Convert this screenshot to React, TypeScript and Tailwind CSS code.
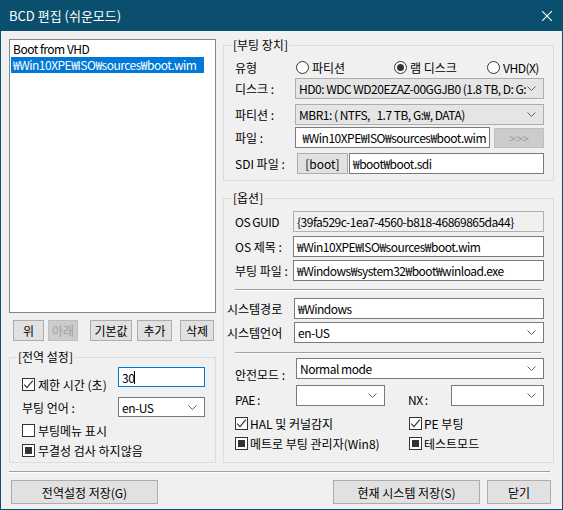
import React from "react";

type CheckState = "on" | "off" | "ind";

function Chevron() {
  return (
    <svg width="9" height="5" viewBox="0 0 9 5" className="shrink-0">
      <path d="M0.5 0.5 L4.5 4.5 L8.5 0.5" fill="none" stroke="#606060" strokeWidth="1" />
    </svg>
  );
}

function Combo({ className, text, gray }: { className: string; text?: string; gray?: boolean }) {
  return (
    <div
      className={`${className} shrink-0 flex items-center border pl-[3px] pr-[7px] ${
        gray ? "bg-[#e5e5e5] border-[#adadad]" : "bg-white border-[#7a7a7a]"
      }`}
    >
      <span className="flex-1 overflow-hidden whitespace-pre tracking-[-0.5px]">{text}</span>
      <Chevron />
    </div>
  );
}

function Field({
  className,
  text,
  ro,
  caret,
  end,
}: {
  className: string;
  text?: string;
  ro?: boolean;
  caret?: boolean;
  end?: boolean;
}) {
  return (
    <div
      className={`${className} shrink-0 flex items-center border overflow-hidden whitespace-nowrap ${
        ro ? "bg-[#f0f0f0] border-[#b0b0b0]" : "bg-white"
      } ${end ? "justify-end pr-[3px]" : "pl-[3px]"}`}
    >
      <span className="shrink-0 tracking-[-0.5px]">{text}</span>
      {caret && <span className="w-[1px] h-[13px] bg-black" />}
    </div>
  );
}

function Btn({ className, children, disabled }: { className: string; children: React.ReactNode; disabled?: boolean }) {
  return (
    <div
      className={`${className} shrink-0 flex items-center justify-center border ${
        disabled ? "bg-[#cccccc] border-[#bfbfbf] text-[#a0a0a0]" : "bg-[#e1e1e1] border-[#adadad]"
      }`}
    >
      {children}
    </div>
  );
}

function Check({ state }: { state: CheckState }) {
  return (
    <span className="w-[13px] h-[13px] border border-[#333333] bg-white flex items-center justify-center shrink-0">
      {state === "on" && (
        <svg width="11" height="11" viewBox="0 0 11 11">
          <path d="M1.2 5.6 L4 8.6 L9.8 1.6" fill="none" stroke="#333333" strokeWidth="1.2" />
        </svg>
      )}
      {state === "ind" && <span className="w-[7px] h-[7px] bg-[#333333]" />}
    </span>
  );
}

function Radio({ checked }: { checked?: boolean }) {
  return (
    <span className="w-[13px] h-[13px] rounded-full border border-[#333333] bg-white flex items-center justify-center shrink-0">
      {checked && <span className="w-[7px] h-[7px] rounded-full bg-[#333333]" />}
    </span>
  );
}

function Sep({ className }: { className: string }) {
  return <div className={`${className} h-[2px] border-t border-t-[#a0a0a0] border-b border-b-white`} />;
}

export default function App() {
  return (
    <div className="w-[563px] h-[510px] bg-[#0b4f6e] flex flex-col font-['Noto_Sans_CJK_KR','Noto_Sans',sans-serif] text-[12px] leading-[15px] text-black">
      {/* title bar */}
      <div className="h-[31px] shrink-0 flex items-center justify-between pl-[9px] pr-[11px] text-white">
        <span className="text-[13px]">BCD 편집 (쉬운모드)</span>
        <svg width="10" height="10" viewBox="0 0 10 10">
          <path d="M0 0 L10 10 M10 0 L0 10" stroke="white" strokeWidth="1.1" />
        </svg>
      </div>

      {/* body */}
      <div className="flex-1 mx-[1px] mb-[1px] bg-[#f0f0f0] pl-[8px] pt-[8px] flex flex-col">
        <div className="flex gap-[7px]">
          {/* left column */}
          <div className="w-[207px] flex flex-col">
            <div className="h-[274px] border border-[#828790] bg-white p-[1px] tracking-[-0.5px]">
              <div className="h-[16px] leading-[16px] pl-[2px]">Boot from VHD</div>
              <div className="h-[16px] leading-[16px] pl-[2px] w-[193px] bg-[#0078d7] text-white whitespace-nowrap overflow-hidden">
                ₩Win10XPE₩ISO₩sources₩boot.wim
              </div>
            </div>

            <div className="mt-[7px] h-[21px] flex">
              <Btn className="ml-[4px] w-[31px]">위</Btn>
              <Btn className="ml-[4px] w-[30px]" disabled>
                아래
              </Btn>
              <Btn className="ml-[12px] w-[42px]">기본값</Btn>
              <Btn className="ml-[5px] w-[35px]">추가</Btn>
              <Btn className="ml-[8px] w-[34px]">삭제</Btn>
            </div>

            <fieldset className="mt-[10px] h-[112px] border border-[#dcdcdc] min-w-0">
              <legend className="ml-[7px] px-[1px] leading-[12px]">[전역 설정]</legend>
              <div className="pl-[12px] flex flex-col">
                <div className="mt-[4px] flex items-start">
                  <div className="w-[96px] mt-[11px] h-[13px] flex items-center">
                    <Check state="on" />
                    <span className="ml-[3px]">제한 시간 (초)</span>
                  </div>
                  <Field className="w-[87px] h-[20px] border-[#0078d7]" text="30" caret />
                </div>
                <div className="mt-[6px] h-[20px] flex items-center">
                  <span className="w-[96px]">부팅 언어 :</span>
                  <Combo className="w-[87px] h-[20px]" text="en-US" />
                </div>
                <div className="mt-[7px] h-[13px] flex items-center">
                  <Check state="off" />
                  <span className="ml-[3px]">부팅메뉴 표시</span>
                </div>
                <div className="mt-[7px] h-[13px] flex items-center">
                  <Check state="ind" />
                  <span className="ml-[3px]">무결성 검사 하지않음</span>
                </div>
              </div>
            </fieldset>
          </div>

          {/* right column */}
          <div className="w-[331px] flex flex-col">
            <fieldset className="h-[142px] border border-[#dcdcdc] min-w-0">
              <legend className="ml-[8px] px-[1px] leading-[12px]">[부팅 장치]</legend>
              <div className="pl-[11px] pr-[9px] flex flex-col">
                <div className="mt-[6px] h-[21px] flex items-center">
                  <span className="w-[61px]">유형</span>
                  <div className="w-[98px] flex items-center">
                    <Radio />
                    <span className="ml-[3px]">파티션</span>
                  </div>
                  <div className="w-[93px] flex items-center">
                    <Radio checked />
                    <span className="ml-[3px]">램 디스크</span>
                  </div>
                  <div className="flex items-center">
                    <Radio />
                    <span className="ml-[3px] tracking-[-0.5px]">VHD(X)</span>
                  </div>
                </div>
                <div className="h-[21px] flex items-center">
                  <span className="w-[60px]">디스크 :</span>
                  <Combo className="w-[249px] h-[21px]" gray text="HD0: WDC WD20EZAZ-00GGJB0 (1.8 TB, D: G:" />
                </div>
                <div className="mt-[5px] h-[21px] flex items-center">
                  <span className="w-[60px]">파티션 :</span>
                  <Combo className="w-[249px] h-[21px]" gray text="MBR1: ( NTFS,   1.7 TB, G:₩, DATA)" />
                </div>
                <div className="mt-[2px] h-[21px] flex items-center">
                  <span className="w-[60px]">파일 :</span>
                  <Field className="w-[195px] h-[21px] border-[#7a7a7a]" end text="₩Win10XPE₩ISO₩sources₩boot.wim" />
                  <Btn className="ml-[4px] w-[50px] h-[20px]" disabled>
                    &gt;&gt;&gt;
                  </Btn>
                </div>
                <div className="mt-[5px] h-[21px] flex items-center">
                  <span className="w-[62px]">SDI 파일 :</span>
                  <Btn className="w-[51px] h-[21px]">[boot]</Btn>
                  <Field className="ml-[1px] w-[195px] h-[21px] border-[#7a7a7a]" text="₩boot₩boot.sdi" />
                </div>
              </div>
            </fieldset>

            <fieldset className="mt-[11px] h-[271px] border border-[#dcdcdc] min-w-0">
              <legend className="ml-[8px] px-[1px] leading-[12px]">[옵션]</legend>
              <div className="pl-[11px] pr-[9px] flex flex-col">
                <div className="mt-[7px] h-[21px] flex items-center">
                  <span className="w-[58px] tracking-[-0.5px]">OS GUID</span>
                  <Field className="w-[251px] h-[21px]" ro text="{39fa529c-1ea7-4560-b818-46869865da44}" />
                </div>
                <div className="mt-[4px] h-[21px] flex items-center">
                  <span className="w-[58px]">OS 제목 :</span>
                  <Field className="w-[251px] h-[21px] border-[#7a7a7a]" text="₩Win10XPE₩ISO₩sources₩boot.wim" />
                </div>
                <div className="mt-[3px] h-[21px] flex items-center">
                  <span className="w-[58px]">부팅 파일 :</span>
                  <Field className="w-[251px] h-[21px] border-[#7a7a7a]" text="₩Windows₩system32₩boot₩winload.exe" />
                </div>
                <Sep className="mt-[8px] w-[306px]" />
                <div className="mt-[7px] h-[21px] flex items-center">
                  <span className="ml-[-8px] w-[67px]">시스템경로</span>
                  <Field className="w-[250px] h-[21px] border-[#7a7a7a]" text="₩Windows" />
                </div>
                <div className="mt-[3px] h-[21px] flex items-center">
                  <span className="ml-[-8px] w-[67px]">시스템언어</span>
                  <Combo className="w-[250px] h-[21px]" text="en-US" />
                </div>
                <Sep className="mt-[9px] w-[306px]" />
                <div className="mt-[4px] h-[21px] flex items-start">
                  <span className="w-[61px] mt-[9px]">안전모드 :</span>
                  <Combo className="w-[248px] h-[21px]" text="Normal mode" />
                </div>
                <div className="mt-[6px] h-[21px] flex items-start">
                  <span className="w-[61px] mt-[7px] tracking-[-0.5px]">PAE :</span>
                  <Combo className="w-[89px] h-[21px]" />
                  <span className="ml-[23px] w-[43px] mt-[7px] tracking-[-0.5px]">NX :</span>
                  <Combo className="w-[93px] h-[21px]" />
                </div>
                <div className="mt-[11px] h-[13px] flex items-center">
                  <div className="w-[174px] flex items-center">
                    <Check state="on" />
                    <span className="ml-[2px]">HAL 및 커널감지</span>
                  </div>
                  <Check state="on" />
                  <span className="ml-[2px]">PE 부팅</span>
                </div>
                <div className="mt-[7px] h-[13px] flex items-center">
                  <div className="w-[174px] flex items-center">
                    <Check state="ind" />
                    <span className="ml-[2px]">메트로 부팅 관리자(Win8)</span>
                  </div>
                  <Check state="ind" />
                  <span className="ml-[2px]">테스트모드</span>
                </div>
              </div>
            </fieldset>
          </div>
        </div>

        <Sep className="mt-[8px] w-[541px]" />
        <div className="mt-[7px] h-[24px] flex">
          <Btn className="ml-[2px] w-[147px]">전역설정 저장(G)</Btn>
          <Btn className="ml-[175px] w-[147px]">현재 시스템 저장(S)</Btn>
          <Btn className="ml-[7px] w-[64px]">닫기</Btn>
        </div>
      </div>
    </div>
  );
}
